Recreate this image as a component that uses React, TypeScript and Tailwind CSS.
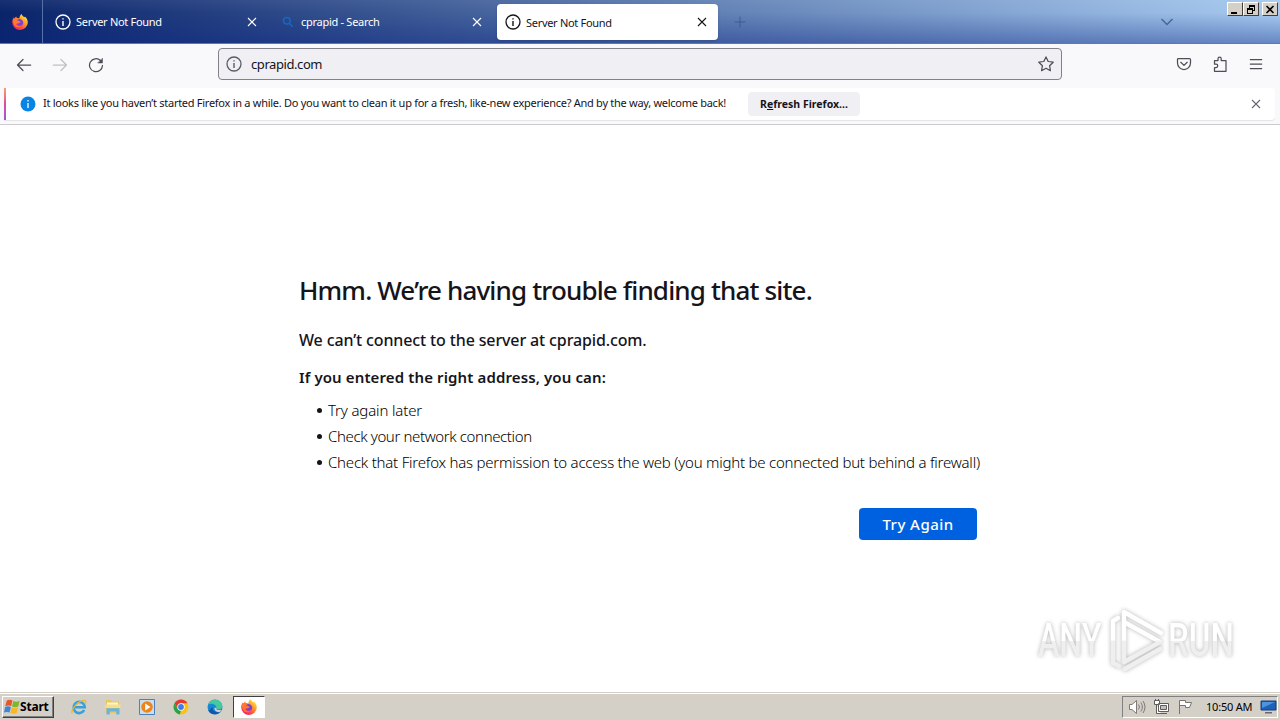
import type { ReactNode } from "react";
import clsx from "clsx";

function FirefoxLogo({ size }: { size: number }) {
  return (
    <svg width={size} height={size} viewBox="0 0 16 16">
      <defs>
        <linearGradient id="fx-body" x1="0.9" y1="0.1" x2="0.2" y2="0.95">
          <stop offset="0" stopColor="#fff04a" />
          <stop offset="0.35" stopColor="#ffa02a" />
          <stop offset="0.7" stopColor="#ff4b3c" />
          <stop offset="1" stopColor="#e8207a" />
        </linearGradient>
      </defs>
      <path
        d="M9.6 0c.3 1.6 1.500 2.200 2.600 3.300.5-.1.6-.4.700-.9 1.700 1.400 2.900 3.400 2.900 6A7.700 7.700 0 0 1 8 16 7.700 7.700 0 0 1 .2 8.300C.2 6 1 4.400 2 3.200c0 .7.200 1 .5 1.300C3 3.700 3.600 2.900 4.400 2.500c-.1.600.1 1.200.6 1.600 1 0 1.700.1 2.300.500C7.400 2.700 8.300 1 9.600 0z"
        fill="url(#fx-body)"
      />
      <path
        d="M5.100 6.600c.8-1.300 2-1.800 3.300-1.400 1.900.5 3 2 2.800 3.800-.2 1.800-1.600 2.900-3.400 2.800-1.600-.1-2.900-1.100-3-2.600.9.600 1.900.5 2.700-.3.400-.4.900-.5 1.200-.7-.3-.8-1.500-1-2.200-1-.5 0-1-.2-1.400-.6z"
        fill="#7a3fe0"
      />
      <path
        d="M1 5.500c1.300-1 2.700-1.100 4-.3-.5.700-.3 1.300.8 1.500 1 .1 2 .4 2 1.100-.4.700-1.700.7-1.900 1.300-.5 1-1.700.9-2.200.400C4.400 12 7 13 9.300 12.300 6.500 14.500 2 13 1.300 9z"
        fill="#ff7a30"
      />
    </svg>
  );
}

function InfoIcon({ className }: { className?: string }) {
  return (
    <svg
      width="16"
      height="16"
      viewBox="0 0 16 16"
      fill="none"
      stroke="currentColor"
      className={clsx("shrink-0", className)}
    >
      <circle cx="8" cy="8" r="7" strokeWidth="1.3" />
      <path d="M8 7v5M8 4.200v1.400" strokeWidth="1.400" />
    </svg>
  );
}

function CloseIcon() {
  return (
    <svg width="10" height="10" viewBox="0 0 10 10" stroke="currentColor" strokeWidth="1.1">
      <path d="M1 1l8 8M9 1l-8 8" />
    </svg>
  );
}

function Stroke({ children, className, size = 16 }: { children: ReactNode; className?: string; size?: number }) {
  return (
    <svg
      width={size}
      height={size}
      viewBox="0 0 16 16"
      fill="none"
      stroke="currentColor"
      strokeWidth="1.25"
      strokeLinecap="round"
      strokeLinejoin="round"
      className={clsx("shrink-0", className)}
    >
      {children}
    </svg>
  );
}

function WindowButton({ children }: { children: ReactNode }) {
  return (
    <div className="flex h-[14px] w-4 items-center justify-center border border-t-white border-r-[#404040] border-b-[#404040] border-l-white bg-[#d4d0c8]">
      <svg width="12" height="11" viewBox="0 0 12 11" fill="none" stroke="#000" shapeRendering="crispEdges">
        {children}
      </svg>
    </div>
  );
}

function TabStrip() {
  return (
    <div className="flex h-11 border-b border-[#6b7890] bg-[linear-gradient(to_bottom,rgba(255,255,255,0.06),rgba(10,36,130,0)_30%,rgba(10,36,130,0.4)),linear-gradient(to_right,#0a246a,#a6caf0)] text-[11px] text-white">
      <div className="flex w-[43px] items-center justify-center border-r border-[#5870a8] pr-[3px]">
        <FirefoxLogo size={16} />
      </div>
      <div className="flex w-[225px] items-center pt-px pl-[12px]">
        <InfoIcon />
        <span className="ml-[5px] pt-px tracking-[-0.3px]">Server Not Found</span>
        <span className="ml-auto pr-[11px]">
          <CloseIcon />
        </span>
      </div>
      <div className="flex w-[225px] items-center pt-px pl-[14px]">
        <svg width="12" height="12" viewBox="0 0 12 12" fill="none" stroke="#1668c4" strokeWidth="1.500">
          <circle cx="4.800" cy="4.800" r="3.300" />
          <path d="M7.300 7.300l3.400 3.400" />
        </svg>
        <span className="ml-[7px] pt-px tracking-[-0.28px]">cprapid - Search</span>
        <span className="ml-auto pr-[11px]">
          <CloseIcon />
        </span>
      </div>
      <div className="mt-1 ml-1 flex h-9 w-[221px] items-center rounded bg-white pl-2 text-[#15141a] shadow-sm">
        <InfoIcon />
        <span className="ml-[5px] pt-[2px] tracking-[-0.3px]">Server Not Found</span>
        <span className="ml-auto pr-[11px]">
          <CloseIcon />
        </span>
      </div>
      <div className="flex w-11 items-center justify-center text-[#3f5c92]">
        <svg width="12" height="12" viewBox="0 0 12 12" stroke="currentColor">
          <path d="M6 0.500v11M0.500 6h11" />
        </svg>
      </div>
      <div className="ml-auto flex items-center pr-[53px] text-[#4a6590]">
        <svg width="14" height="8" viewBox="0 0 14 8" fill="none" stroke="currentColor" strokeWidth="1.400">
          <path d="M1.500 1l5.500 5.500L12.500 1" />
        </svg>
      </div>
      <div className="mt-[2px] mr-[2px] flex">
        <WindowButton>
          <path d="M2 9h6" strokeWidth="2" />
        </WindowButton>
        <WindowButton>
          <path d="M4.500 4V1.500h5v5H8M4 2h6M2.500 4.500h5v5h-5zM2 5h6" />
        </WindowButton>
        <div className="w-[3px]" />
        <WindowButton>
          <path d="M2.500 2l7 7M9.500 2l-7 7" strokeWidth="1.600" shapeRendering="auto" />
        </WindowButton>
      </div>
    </div>
  );
}

function Toolbar() {
  return (
    <div className="flex h-11 items-center bg-[#f9f9fb] pb-1 text-[#4f4e58]">
      <div className="flex w-[218px] items-center gap-5 pt-px pl-4">
        <Stroke>
          <path d="M14.700 8H1.500M7 2.500L1.500 8 7 13.500" />
        </Stroke>
        <Stroke className="text-[#c0c0c6]">
          <path d="M1.300 8h13.200M9 2.500L14.500 8 9 13.500" />
        </Stroke>
        <Stroke>
          <path d="M14.500 8.500A6.500 6.500 0 1 1 12.500 3.500" />
          <path d="M14.500 1.500v4.500H10z" fill="currentColor" strokeWidth="0.500" />
        </Stroke>
      </div>
      <div className="flex h-8 w-[844px] items-center rounded-[4px] border border-[#82818a] bg-[#f0f0f4] px-[7px]">
        <InfoIcon className="text-[#5b5b66]" />
        <span className="ml-[9px] pt-px text-[13px] tracking-[-0.42px] text-[#15141a]">cprapid.com</span>
        <Stroke className="ml-auto">
          <path d="M8 .9l2.200 4.600 5 .7-3.600 3.500.8 5L8 12.300l-4.400 2.400.8-5L.8 6.200l5-.7z" />
        </Stroke>
      </div>
      <div className="ml-auto flex items-center gap-5 pr-4">
        <Stroke>
          <path d="M2.500 2.500h11a1 1 0 0 1 1 1V7a6.500 6.500 0 0 1-13 0V3.500a1 1 0 0 1 1-1zM4.800 6.300L8 9.400l3.200-3.100" />
        </Stroke>
        <Stroke>
          <path d="M2.500 4.500H6V2.800a1.600 1.600 0 0 1 3.200 0v1.700H14v10.800H2.500v-3.800h1.600a1.600 1.600 0 0 0 0-3.300H2.500z" />
        </Stroke>
        <Stroke>
          <path d="M2.300 3.500h11.400M2.300 8h11.400M2.300 12.500h11.400" />
        </Stroke>
      </div>
    </div>
  );
}

function Notification() {
  return (
    <div className="h-[37px] border-b border-[#ccccd0] bg-[#f9f9fb] pr-[5px] pl-1">
      <div className="flex h-8 items-center rounded-r-[4px] bg-white text-[11px] text-[#15141a] shadow-[0_1px_1px_#e4e4e8]">
        <div className="h-8 w-[2px] bg-linear-to-b from-[#ff9a6c] via-[#e0489c] to-[#9059d8]" />
        <svg width="16" height="16" viewBox="0 0 16 16" className="ml-[14px]">
          <circle cx="8" cy="8" r="7.500" fill="#0a84e4" />
          <path d="M8 7v5M8 4v1.500" stroke="#fff" strokeWidth="1.300" />
        </svg>
        <span className="ml-[7px] w-[705px] pb-px whitespace-nowrap tracking-[-0.275px]">
          It looks like you haven’t started Firefox in a while. Do you want to clean it up for a fresh, like-new
          experience? And by the way, welcome back!
        </span>
        <button className="h-6 w-28 rounded-[4px] bg-[#f0f0f4] pt-px text-[10.500px] font-bold whitespace-nowrap">
          R<u>e</u>fresh Firefox...
        </button>
        <span className="ml-auto pr-[14px] text-[#6a6973]">
          <CloseIcon />
        </span>
      </div>
    </div>
  );
}

const suggestions = [
  { text: "Try again later", tracking: "tracking-[-0.15px]" },
  { text: "Check your network connection", tracking: "tracking-[-0.38px]" },
  {
    text: "Check that Firefox has permission to access the web (you might be connected but behind a firewall)",
    tracking: "tracking-[-0.222px]",
  },
];

function ErrorPage() {
  return (
    <main className="relative h-[567px] bg-white pt-[145px] pl-[299px] text-[#15141a]">
      <h1 className="h-[40px] text-[26px] leading-[40px] font-medium tracking-[-0.85px] whitespace-nowrap">
        Hmm. We’re having trouble finding that site.
      </h1>
      <p className="mt-[18px] h-6 text-[16px] leading-6 font-medium tracking-[-0.13px] whitespace-nowrap">
        We can’t connect to the server at cprapid.com.
      </p>
      <p className="mt-[13px] h-6 text-[15px] leading-6 font-semibold tracking-[0.12px] whitespace-nowrap">
        If you entered the right address, you can:
      </p>
      <ul className="mt-[8px] text-[15px] leading-[26px] font-light text-black">
        {suggestions.map(({ text, tracking }) => (
          <li key={text} className={clsx("flex items-center whitespace-nowrap", tracking)}>
            <span className="mt-px mr-[6px] ml-[18px] size-[5px] rounded-full bg-[#15141a]" />
            {text}
          </li>
        ))}
      </ul>
      <button className="mt-[33px] ml-[560px] block h-8 w-[118px] rounded-[4px] bg-[#0061e0] text-[15px] font-medium tracking-[0.45px] text-white">
        Try Again
      </button>
      <Watermark />
    </main>
  );
}

function Watermark() {
  return (
    <div className="absolute top-[482px] left-[1034px] flex h-[66px] w-[204px] items-center justify-between px-1 font-['Roboto',sans-serif] text-[46px] leading-none font-medium drop-shadow-[0_0_2px_#b4b4b4]">
      <span className="w-[66px]">
        <span className="inline-block origin-left scale-x-[0.7] bg-linear-to-b from-white from-52% to-[#efefef] to-52% bg-clip-text text-transparent">
          ANY
        </span>
      </span>
      <svg width="60" height="66" viewBox="0 0 60 66" fill="none" strokeLinejoin="round" strokeLinecap="round">
        <defs>
          <linearGradient id="mark" gradientUnits="userSpaceOnUse" x1="0" y1="0" x2="0" y2="66">
            <stop offset="0.5" stopColor="#fff" />
            <stop offset="0.52" stopColor="#efefef" />
          </linearGradient>
        </defs>
        <g stroke="url(#mark)" strokeWidth="4.500">
          <path d="M18 52V5l37 21" />
          <path d="M18 15l36 20-36 20" />
          <path d="M12 11l-5 3v42l6 3" />
          <path d="M19 62l35-20" />
        </g>
      </svg>
      <span className="w-[66px]">
        <span className="inline-block origin-left scale-x-[0.72] bg-linear-to-b from-white from-52% to-[#efefef] to-52% bg-clip-text text-transparent">
          RUN
        </span>
      </span>
    </div>
  );
}

function WindowsFlag() {
  return (
    <svg width="16" height="16" viewBox="0 0 16 16" className="shrink-0">
      <path d="M2.800 1.500c2-1 3.800-.9 5.700 0L7.200 7.100c-1.900-.9-3.800-.9-5.900 0z" fill="#e8562a" />
      <path d="M9.300 2c1.900.9 4 .9 6.300 0l-1.400 5.600c-2.200.9-4.200.8-6.200 0z" fill="#7cb82c" />
      <path d="M1.100 8c2.100-.9 3.900-.8 5.800 0L5.600 13.500c-1.900-.8-3.700-.8-5.600 0z" fill="#3f86d8" />
      <path d="M7.700 8.500c2 .8 4 .9 6.300 0l-1.300 5.500c-2.300.9-4.300.8-6.300 0z" fill="#f8b824" />
    </svg>
  );
}

function QuickLaunch() {
  return (
    <div className="ml-[17px] flex items-center gap-[18px]">
      <svg width="16" height="16" viewBox="0 0 16 16" fill="none">
        <path d="M13.200 11A5.600 5.600 0 1 1 13.800 8.300H4" stroke="#3aa0dc" strokeWidth="2.600" />
        <path d="M1.300 14.500C-.5 12 5 3.500 11.500 1.600c3.500-1 3.800 1 2.800 3" stroke="#e8b82e" strokeWidth="1.200" />
      </svg>
      <svg width="16" height="16" viewBox="0 0 16 16">
        <path d="M1 1h5l1 1.500h7V14H1z" fill="#e8c860" />
        <path d="M2 3.500h11v4H2z" fill="#fff6cf" />
        <path d="M.5 5.500h15V9H.5z" fill="#f5df8d" />
        <path d="M1.500 15.500V9.300h13v6.200h-3.300v-3H4.800v3z" fill="#6ab4dc" />
      </svg>
      <svg width="16" height="16" viewBox="0 0 16 16">
        <path d="M.5.500h15v15H.5z" fill="#c8dff0" stroke="#4a83bc" />
        <circle cx="8" cy="8" r="5.800" fill="#f08418" />
        <path d="M6.200 4.500L11.500 8l-5.300 3.500z" fill="#fff" />
      </svg>
      <svg width="16" height="16" viewBox="0 0 16 16">
        <circle cx="8" cy="8" r="7.500" fill="#fbc116" />
        <path d="M1.500 4.300A7.500 7.500 0 0 1 14.500 4.300H8L4.800 9.800z" fill="#e33b2e" />
        <path d="M1.500 4.300L4.800 9.900 8 11.700 6.800 15.400A7.500 7.500 0 0 1 1.500 4.300z" fill="#2da24c" />
        <circle cx="8" cy="8" r="3.700" fill="#fff" />
        <circle cx="8" cy="8" r="2.900" fill="#3f7ee8" />
      </svg>
      <svg width="16" height="16" viewBox="0 0 16 16">
        <circle cx="8" cy="8" r="7.500" fill="#1787d8" />
        <path d="M1 5.500C3 0 11-.8 14.300 4c1.900 3 1.100 6-1.800 6.300-2 .2-3.500-.3-3-1.500C10 6 5 3.500 1 5.500z" fill="#48c99b" />
        <path d="M5.500 8c-.4 3.500 3 6.300 7.300 5.300C9 17 2.500 15.300 1 11 3 13 4 8 5.500 8z" fill="#1257a5" />
        <path d="M9.500 8.500c-.8 1.800.5 3 5 2.500l-1.700 2C9.500 13.500 7 11 7.500 9z" fill="#d4d0c8" />
      </svg>
    </div>
  );
}

function Taskbar() {
  return (
    <footer className="flex h-7 items-center border-t border-[#d4d0c8] bg-[#d4d0c8] text-[11px] text-black shadow-[inset_0_1px_0_#fff]">
      <button className="mt-px ml-[2px] flex h-[22px] w-[52px] items-center border border-t-white border-r-[#404040] border-b-[#404040] border-l-white pl-px font-bold shadow-[inset_-1px_-1px_0_#808080]">
        <WindowsFlag />
        <span className="text-[12px] tracking-[-0.2px]">Start</span>
      </button>
      <QuickLaunch />
      <div className="mt-px ml-[10px] flex h-[22px] w-8 items-center justify-center border border-t-[#404040] border-r-white border-b-white border-l-[#404040] bg-white">
        <FirefoxLogo size={16} />
      </div>
      <div className="mt-px mr-[2px] ml-auto flex h-[22px] w-[156px] items-center border border-t-[#808080] border-r-white border-b-white border-l-[#808080] pl-[6px]">
        <svg width="17" height="16" viewBox="0 0 17 16" fill="#fff" stroke="#7d7b78">
          <path d="M.5 5.500H3L7.500 1.500v13L3 10.500H.5z" />
          <path d="M9.500 5.500q2 2.500 0 5M11.800 3.500q3.200 4.500 0 9M14 2q4 6 0 12" fill="none" />
        </svg>
        <svg width="17" height="16" viewBox="0 0 17 16" fill="#fff" stroke="#5f5d5b" className="ml-[7px]">
          <path d="M5.500 4.500h10v8h-10zM8 14.500h6M1.500 1.500h5v4h-5zM3.500 5.500v9H8M2.500 0v2M5.500 0v2" />
          <path d="M7.500 6.500h6v4h-6z" fill="#c4c0b8" />
        </svg>
        <svg width="17" height="16" viewBox="0 0 17 16" fill="#fff" stroke="#777571" className="ml-[7px]">
          <path d="M2.500 15V1.500h6v2h6l-2 5H8.500v-2h-6" />
        </svg>
        <span className="ml-3 tracking-[-0.2px] whitespace-nowrap">10:50 AM</span>
        <svg width="17" height="14" viewBox="0 0 17 14" className="ml-auto shrink-0">
          <path d="M1 1h15v9H1z" fill="#1d62b8" stroke="#143f78" />
          <path d="M2 2h13L2 8z" fill="#4d93df" />
          <path d="M5 12h7v1.500H5z" fill="#667" />
        </svg>
      </div>
    </footer>
  );
}

export default function App() {
  return (
    <div className="h-[720px] w-[1280px] overflow-hidden bg-white font-['Noto_Sans','DejaVu_Sans',sans-serif]">
      <TabStrip />
      <Toolbar />
      <Notification />
      <ErrorPage />
      <Taskbar />
    </div>
  );
}
